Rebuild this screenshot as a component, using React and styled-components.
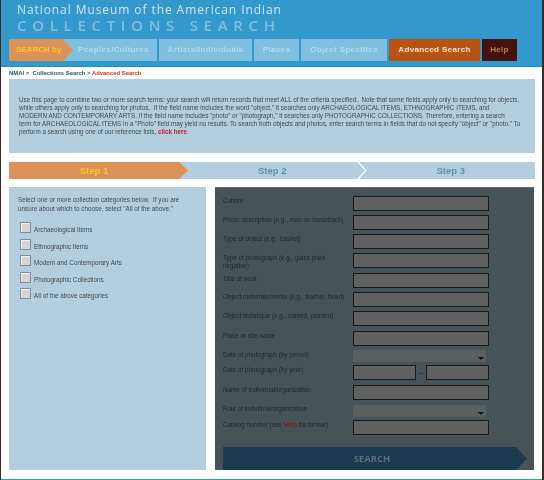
import React from "react"
import styled, { createGlobalStyle } from "styled-components"

const GlobalStyle = createGlobalStyle`
  html, body {
    margin: 0;
    padding: 0;
    background: #3b2a26;
  }
  * {
    box-sizing: border-box;
  }
`

const Page = styled.div`
  width: 541px;
  height: 480px;
  margin-left: 1px;
  background: white;
  font-family: "Liberation Sans", Arial, sans-serif;
  overflow: hidden;
  display: flex;
  flex-direction: column;
  filter: blur(0.3px);
`

const Header = styled.div`
  height: 67px;
  background: #3399cc;
  border-bottom: 1px solid #2c8abb;
  padding: 3px 0 0 16px;
  flex: none;
`

const SiteTitle = styled.div`
  font-family: "Open Sans", sans-serif;
  font-size: 12px;
  line-height: 14px;
  letter-spacing: 0.92px;
  color: #cfe6f2;
  white-space: nowrap;
`

const SiteSubtitle = styled.div`
  font-family: "Open Sans", sans-serif;
  font-weight: 600;
  font-size: 15px;
  line-height: 16px;
  letter-spacing: 5.7px;
  color: #80bfdf;
  white-space: nowrap;
`

const Nav = styled.div`
  display: flex;
  gap: 2px;
  margin: 6px 0 0 -8px;
`

const SearchBy = styled.div`
  width: 64px;
  height: 22px;
  background: #dd9158;
  color: #fec52e;
  font-size: 8px;
  font-weight: bold;
  line-height: 22px;
  padding-left: 7px;
  clip-path: polygon(0 0, 54px 0, 100% 50%, 54px 100%, 0 100%);
  margin-right: -13px;
  position: relative;
`

const NavItem = styled.div`
  height: 22px;
  width: ${(p) => p.$w}px;
  padding-left: ${(p) => p.$pad || 0}px;
  text-align: ${(p) => (p.$pad ? "left" : "center")};
  background: ${(p) => p.$bg || "#7fbfdf"};
  color: ${(p) => p.$color || "#b5daee"};
  font-size: 8.1px;
  font-weight: bold;
  letter-spacing: 0.3px;
  line-height: 22px;
  white-space: nowrap;
`

const Breadcrumb = styled.div`
  font-size: 5.9px;
  font-weight: bold;
  line-height: 8px;
  padding: 2px 0 0 8px;
  color: #1d4f7c;
  height: 12px;
  flex: none;
`

const Current = styled.span`
  color: #c8321e;
`

const InfoBox = styled.div`
  margin-left: 8px;
  width: 526px;
  height: 74px;
  background: #b3cfdf;
  padding: 17px 0 0 10px;
  font-size: 6.3px;
  line-height: 8px;
  color: #44484c;
  white-space: nowrap;
  flex: none;
`

const ClickHere = styled.span`
  color: #b5232a;
  font-weight: bold;
`

const Steps = styled.div`
  margin: 9px 0 0 8px;
  width: 526px;
  height: 17px;
  display: flex;
  flex: none;
  background: #b3cfdf;
`

const Step = styled.div`
  flex: 1;
  text-align: center;
  font-size: 9.5px;
  font-weight: bold;
  line-height: 17px;
  color: #5f8fae;
`

const ActiveStep = styled.div`
  width: 179px;
  height: 17px;
  flex: none;
  padding-right: 9px;
  text-align: center;
  font-size: 9.5px;
  font-weight: bold;
  line-height: 17px;
  color: #fec52e;
  background: #dd9158;
  clip-path: polygon(0 0, 170px 0, 100% 50%, 170px 100%, 0 100%);
`

const Chevron = styled.svg`
  width: 10px;
  height: 17px;
  flex: none;
  display: block;
`

const Columns = styled.div`
  display: flex;
  gap: 9px;
  margin: 8px 0 0 8px;
  flex: none;
`

const LeftPanel = styled.div`
  width: 197px;
  height: 283px;
  background: #b3cfdf;
  padding: 8px 0 0 9px;
  font-size: 6.3px;
  line-height: 9px;
  color: #44484c;
  white-space: nowrap;
`

const CheckList = styled.div`
  display: flex;
  flex-direction: column;
  gap: 4.6px;
  margin-top: 9px;
`

const CheckRow = styled.label`
  display: flex;
  align-items: flex-end;
  gap: 3px;
  height: 12px;
  line-height: 9px;
  padding-left: 2px;
`

const CheckBox = styled.span`
  width: 11px;
  height: 11px;
  flex: none;
  background: #d5d5d5;
  border: 1px solid #8a8a8a;
  box-shadow: inset 1px 1px 0 #f2f2f2;
  margin-bottom: 1px;
`

const RightPanel = styled.div`
  width: 319px;
  height: 283px;
  background: #475357;
  border-top: 1px solid #5f696c;
  padding: 8px 8px 0 8px;
  font-size: 6.3px;
  line-height: 8px;
  color: #202628;
`

const FieldRow = styled.div`
  display: grid;
  grid-template-columns: 130px 136px;
  height: ${(p) => p.$h}px;
`

const FieldLabel = styled.div`
  white-space: nowrap;
  padding-top: ${(p) => p.$top ?? 1}px;
`

const HelpLink = styled.span`
  color: #7a1f1f;
  font-weight: bold;
`

const TextInput = styled.div`
  height: 15px;
  width: ${(p) => p.$w || 136}px;
  background: #616161;
  border: 1px solid #15191a;
`

const YearRow = styled.div`
  display: flex;
  align-items: center;
  height: 15px;
`

const Dash = styled.span`
  width: 10px;
  text-align: center;
  font-size: 8px;
  color: #1f2324;
`

const SelectBox = styled.div`
  height: 12px;
  width: 133px;
  background: #5a5f60;
  border-radius: 1px;
  position: relative;
  &::after {
    content: "";
    position: absolute;
    right: 2px;
    bottom: 2px;
    border-left: 3px solid transparent;
    border-right: 3px solid transparent;
    border-top: 3px solid #111;
  }
`

const SearchButton = styled.div`
  width: 304px;
  height: 23px;
  margin-top: 12px;
  padding-right: 6px;
  background: #1b3a50;
  color: #5e6e78;
  font-family: "Open Sans", sans-serif;
  font-size: 9.5px;
  font-weight: 700;
  line-height: 23px;
  text-align: center;
  clip-path: polygon(0 0, 293px 0, 100% 50%, 293px 100%, 0 100%);
`

const BottomBar = styled.div`
  height: 1px;
  margin-top: 9px;
  background: #3399cc;
  flex: none;
`

const categories = [
  "Archaeological Items",
  "Ethnographic Items",
  "Modern and Contemporary Arts",
  "Photographic Collections",
  "All of the above categories",
]

const App = () => {
  return (
    <>
      <GlobalStyle />
      <Page>
        <Header>
          <SiteTitle>National Museum of the American Indian</SiteTitle>
          <SiteSubtitle>COLLECTIONS SEARCH</SiteSubtitle>
          <Nav>
            <SearchBy>SEARCH by</SearchBy>
            <NavItem $w={95} $pad={16}>Peoples/Cultures</NavItem>
            <NavItem $w={93}>Artists/Individuals</NavItem>
            <NavItem $w={45}>Places</NavItem>
            <NavItem $w={86}>Object Specifics</NavItem>
            <NavItem $w={91} $bg="#b95312" $color="#f7e7da">Advanced Search</NavItem>
            <NavItem $w={35} $bg="#45130f" $color="#c47a45">Help</NavItem>
          </Nav>
        </Header>
        <Breadcrumb>
          NMAI &gt;&nbsp; Collections Search &gt; <Current>Advanced Search</Current>
        </Breadcrumb>
        <InfoBox>
          Use this page to combine two or more search terms: your search will return records that meet ALL of the criteria specified.&nbsp; Note that some fields apply only to searching for objects,<br />
          while others apply only to searching for photos.&nbsp; If the field name includes the word "object," it searches only ARCHAEOLOGICAL ITEMS, ETHNOGRAPHIC ITEMS, and<br />
          MODERN AND CONTEMPORARY ARTS. If the field name includes "photo" or "photograph," it searches only PHOTOGRAPHIC COLLECTIONS. Therefore, entering a search<br />
          term for ARCHAEOLOGICAL ITEMS in a "Photo" field may yield no results. To search both objects and photos, enter search terms in fields that do not specify "object" or "photo." To<br />
          perform a search using one of our reference lists, <ClickHere>click here</ClickHere>.
        </InfoBox>
        <Steps>
          <ActiveStep>Step 1</ActiveStep>
          <Step>Step 2</Step>
          <Chevron viewBox="0 0 10 17">
            <path d="M1 0 L9 8.5 L1 17" fill="none" stroke="white" strokeWidth="1.2" />
          </Chevron>
          <Step>Step 3</Step>
        </Steps>
        <Columns>
          <LeftPanel>
            Select one or more collection categories below.&nbsp; If you are<br />
            unsure about which to choose, select "All of the above."
            <CheckList>
              {categories.map((c) => (
                <CheckRow key={c}>
                  <CheckBox />
                  {c}
                </CheckRow>
              ))}
            </CheckList>
          </LeftPanel>
          <RightPanel>
            <FieldRow $h={19}><FieldLabel>Culture</FieldLabel><TextInput /></FieldRow>
            <FieldRow $h={19}><FieldLabel>Photo description (e.g., man on horseback)</FieldLabel><TextInput /></FieldRow>
            <FieldRow $h={19}><FieldLabel>Type of object (e.g., basket)</FieldLabel><TextInput /></FieldRow>
            <FieldRow $h={20}><FieldLabel>Type of photograph (e.g., glass plate<br />negative)</FieldLabel><TextInput /></FieldRow>
            <FieldRow $h={19}><FieldLabel $top={2}>Title of work</FieldLabel><TextInput /></FieldRow>
            <FieldRow $h={19}><FieldLabel>Object materials/media (e.g., feather, bead)</FieldLabel><TextInput /></FieldRow>
            <FieldRow $h={20}><FieldLabel>Object technique (e.g., carved, painted)</FieldLabel><TextInput /></FieldRow>
            <FieldRow $h={19}><FieldLabel>Place or site name</FieldLabel><TextInput /></FieldRow>
            <FieldRow $h={15}><FieldLabel>Date of photograph (by period)</FieldLabel><SelectBox /></FieldRow>
            <FieldRow $h={20}>
              <FieldLabel>Date of photograph (by year)</FieldLabel>
              <YearRow><TextInput $w={63} /><Dash>–</Dash><TextInput $w={63} /></YearRow>
            </FieldRow>
            <FieldRow $h={20}><FieldLabel>Name of individual/organization</FieldLabel><TextInput /></FieldRow>
            <FieldRow $h={15}><FieldLabel $top={0}>Role of individual/organization</FieldLabel><SelectBox /></FieldRow>
            <FieldRow $h={15}>
              <FieldLabel>Catalog number (see <HelpLink>Help</HelpLink> for format)</FieldLabel>
              <TextInput />
            </FieldRow>
            <SearchButton>SEARCH</SearchButton>
          </RightPanel>
        </Columns>
        <BottomBar />
      </Page>
    </>
  )
}

export default App
